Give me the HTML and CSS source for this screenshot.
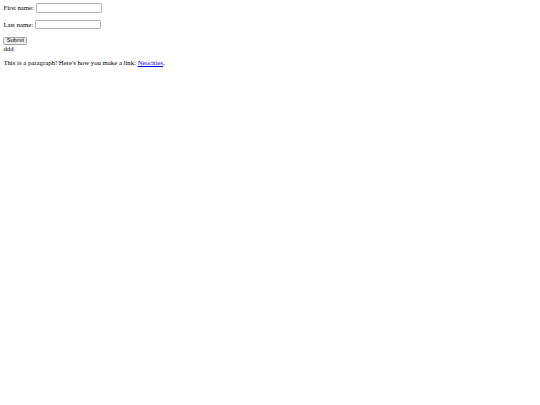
FILE: index.html
```html
<!DOCTYPE html>
<html>
<head>
<meta charset="utf-8">
<title>Form</title>
<link rel="stylesheet" href="styles.css">
</head>
<body class="page">
<form class="name-form">
First name: <input class="text-field" type="text" name="fname"><br><br>
Last name: <input class="text-field" type="text" name="lname"><br><br>
<input class="submit-btn" type="submit" value="Submit">
</form>
ddd
<p class="intro">This is a paragraph! Here's how you make a link: <a class="link" href="#">Neocities</a>.</p>
</body>
</html>
```
FILE: styles.css
```css
.page {
  margin: 3.375px;
  font-family: "Liberation Serif", "Times New Roman", serif;
  font-size: 6.75px;
  color: #000;
  background: #fff;
}
.name-form {
  margin: 0;
}
.text-field {
  box-sizing: border-box;
  width: 66.6px;
  height: 9.4px;
  margin: 0;
  padding: 0 1px;
  border: 1px solid #b4b4b4;
  border-radius: 1px;
  font-family: "Liberation Sans", Arial, sans-serif;
  font-size: 5.6px;
  background: #fff;
}
.submit-btn {
  box-sizing: border-box;
  width: 24px;
  height: 8.6px;
  margin: 0;
  padding: 0;
  border: 1px solid #a6a6a6;
  border-radius: 1.5px;
  background: #efefef;
  color: #000;
  font-family: "Liberation Sans", Arial, sans-serif;
  font-size: 5.6px;
  line-height: 1;
}
.intro {
  margin: 6.75px 0;
}
.link {
  color: #0000ee;
}
```
